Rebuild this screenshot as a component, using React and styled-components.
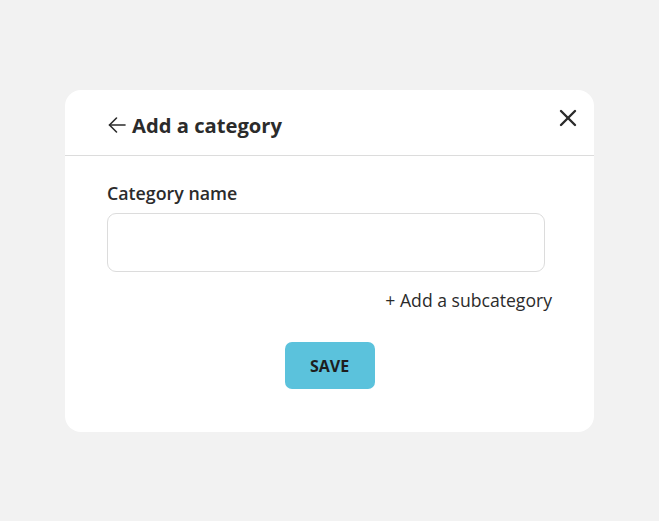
import React from "react";
import styled, { createGlobalStyle } from "styled-components";

const GlobalStyle = createGlobalStyle`
  html, body {
    margin: 0;
    padding: 0;
    background: #f2f2f2;
    font-family: "Open Sans", "Liberation Sans", sans-serif;
    color: #2b2b2b;
  }
`;

const Page = styled.div`
  width: 659px;
  height: 521px;
  padding-top: 90px;
  padding-left: 65px;
  box-sizing: border-box;
`;

const Card = styled.div`
  width: 529px;
  height: 342px;
  background: #ffffff;
  border-radius: 16px;
  box-sizing: border-box;
`;

const Header = styled.div`
  display: flex;
  align-items: flex-start;
  justify-content: space-between;
  height: 66px;
  padding: 0 17px 0 42px;
  border-bottom: 1px solid #dcdcdc;
  box-sizing: border-box;
`;

const TitleRow = styled.div`
  display: flex;
  align-items: center;
  gap: 5px;
  margin-top: 21px;
`;

const Title = styled.h2`
  margin: 0;
  font-size: 20.2px;
  font-weight: 700;
  color: #2b2b2b;
  line-height: 28px;
`;

const IconButton = styled.button`
  border: none;
  background: none;
  padding: 0;
  display: flex;
  align-items: center;
  justify-content: center;
  cursor: pointer;
  color: #2b2b2b;
  margin-top: ${(p) => p.$top || 0}px;
`;

const Body = styled.div`
  padding: 25px 42px 0 42px;
  display: flex;
  flex-direction: column;
`;

const Label = styled.label`
  font-size: 17.8px;
  font-weight: 600;
  line-height: 24px;
  color: #2b2b2b;
`;

const Input = styled.input`
  margin-top: 8px;
  width: 438px;
  height: 59px;
  border: 1px solid #dcdcdc;
  border-radius: 9px;
  box-sizing: border-box;
  font-family: inherit;
  font-size: 16px;
  padding: 0 14px;
  outline: none;
`;

const SubLink = styled.a`
  align-self: flex-end;
  margin-top: 16px;
  font-size: 17.6px;
  line-height: 24px;
  color: #2b2b2b;
  cursor: pointer;
`;

const SaveButton = styled.button`
  align-self: center;
  margin-top: 30px;
  width: 90px;
  height: 47px;
  border: none;
  border-radius: 7px;
  background: #5bc2dc;
  color: #1e1e1e;
  font-family: inherit;
  font-size: 16px;
  font-weight: 700;
  cursor: pointer;
`;

export default function App() {
  return (
    <>
      <GlobalStyle />
      <Page>
        <Card>
          <Header>
            <TitleRow>
              <IconButton aria-label="Back">
                <svg width="20" height="20" viewBox="0 0 20 20" fill="none" stroke="#2b2b2b" strokeWidth="1.6" strokeLinecap="round" strokeLinejoin="round">
                  <path d="M18 10H2.5" />
                  <path d="M9.5 3L2.5 10l7 7" />
                </svg>
              </IconButton>
              <Title>Add a category</Title>
            </TitleRow>
            <IconButton $top={19} aria-label="Close">
                <svg width="18" height="18" viewBox="0 0 18 18" fill="none" stroke="#2b2b2b" strokeWidth="2.4" strokeLinecap="round">
                  <path d="M2 2l14 14" />
                  <path d="M16 2L2 16" />
                </svg>
            </IconButton>
          </Header>
          <Body>
            <Label htmlFor="cat">Category name</Label>
            <Input id="cat" />
            <SubLink>+ Add a subcategory</SubLink>
            <SaveButton>SAVE</SaveButton>
          </Body>
        </Card>
      </Page>
    </>
  );
}
